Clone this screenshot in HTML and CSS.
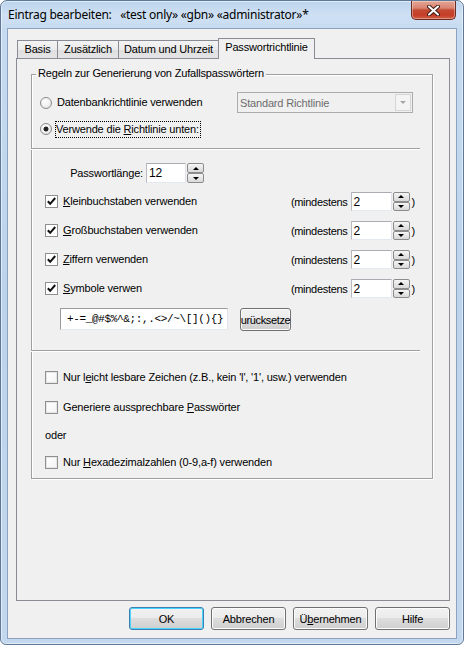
FILE: index.html
```html
<!DOCTYPE html>
<html lang="de">
<head>
<meta charset="utf-8">
<title>Eintrag bearbeiten</title>
<link rel="stylesheet" href="styles.css">
</head>
<body>
<div class="window">
  <div class="titlebar">
    <span class="title">Eintrag bearbeiten:&nbsp;&nbsp; «test only» «gbn» «administrator»*</span>
    <div class="close">
      <svg width="13" height="11" viewBox="0 0 13 11">
        <path d="M2 1.5 L11 9.5 M11 1.5 L2 9.5" stroke="#3d1c16" stroke-width="4" stroke-linecap="round" fill="none"/>
        <path d="M2 1.5 L11 9.5 M11 1.5 L2 9.5" stroke="#ffffff" stroke-width="2" stroke-linecap="round" fill="none"/>
      </svg>
    </div>
  </div>
  <div class="client">
    <div class="tabs">
      <div class="tab w-basis">Basis</div>
      <div class="tab w-zus">Zusätzlich</div>
      <div class="tab w-datum">Datum und Uhrzeit</div>
      <div class="tab w-pass active">Passwortrichtlinie</div>
    </div>
    <div class="panel">
      <div class="group">
        <span class="legend">Regeln zur Generierung von Zufallspasswörtern</span>

        <div class="row row-combo">
          <span class="radio"></span>
          <span class="lbl">Datenbankrichtlinie verwenden</span>
          <div class="combo">
            <span class="combo-text">Standard Richtlinie</span>
            <span class="combo-btn"><span class="arrow-down gray"></span></span>
          </div>
        </div>

        <div class="row row-radio2">
          <span class="radio checked"></span>
          <span class="lbl focus">Verwende die <u>R</u>ichtlinie unten:</span>
        </div>

        <div class="sep sep1"></div>

        <div class="row row-len">
          <span class="len-label">Passwortlänge:</span>
          <div class="edit len-edit">12</div>
          <div class="spin"><span class="sbtn"><span class="arrow-up"></span></span><span class="sbtn"><span class="arrow-down"></span></span></div>
        </div>

        <div class="row row-chk first">
          <div class="chk-left"><span class="check on"><svg width="11" height="11" viewBox="0 0 11 11"><path d="M1.8 5.2 L4.2 7.8 L9.2 2" stroke="#111" stroke-width="2" fill="none"/></svg></span><span class="lbl"><u>K</u>leinbuchstaben verwenden</span></div>
          <span class="min">(mindestens</span>
          <div class="edit min-edit">2</div>
          <div class="spin"><span class="sbtn"><span class="arrow-up"></span></span><span class="sbtn"><span class="arrow-down"></span></span></div>
          <span class="paren">)</span>
        </div>

        <div class="row row-chk">
          <div class="chk-left"><span class="check on"><svg width="11" height="11" viewBox="0 0 11 11"><path d="M1.8 5.2 L4.2 7.8 L9.2 2" stroke="#111" stroke-width="2" fill="none"/></svg></span><span class="lbl"><u>G</u>roßbuchstaben verwenden</span></div>
          <span class="min">(mindestens</span>
          <div class="edit min-edit">2</div>
          <div class="spin"><span class="sbtn"><span class="arrow-up"></span></span><span class="sbtn"><span class="arrow-down"></span></span></div>
          <span class="paren">)</span>
        </div>

        <div class="row row-chk">
          <div class="chk-left"><span class="check on"><svg width="11" height="11" viewBox="0 0 11 11"><path d="M1.8 5.2 L4.2 7.8 L9.2 2" stroke="#111" stroke-width="2" fill="none"/></svg></span><span class="lbl"><u>Z</u>iffern verwenden</span></div>
          <span class="min">(mindestens</span>
          <div class="edit min-edit">2</div>
          <div class="spin"><span class="sbtn"><span class="arrow-up"></span></span><span class="sbtn"><span class="arrow-down"></span></span></div>
          <span class="paren">)</span>
        </div>

        <div class="row row-chk">
          <div class="chk-left"><span class="check on"><svg width="11" height="11" viewBox="0 0 11 11"><path d="M1.8 5.2 L4.2 7.8 L9.2 2" stroke="#111" stroke-width="2" fill="none"/></svg></span><span class="lbl"><u>S</u>ymbole verwen</span></div>
          <span class="min">(mindestens</span>
          <div class="edit min-edit">2</div>
          <div class="spin"><span class="sbtn"><span class="arrow-up"></span></span><span class="sbtn"><span class="arrow-down"></span></span></div>
          <span class="paren">)</span>
        </div>

        <div class="row row-sym">
          <div class="edit sym-edit">+-=_@#$%^&amp;;:,.&lt;&gt;/~\[](){}</div>
          <div class="btn reset"><span>urücksetze</span></div>
        </div>

        <div class="sep sep2"></div>

        <div class="row row-opt o1">
          <span class="check"></span><span class="lbl">Nur l<u>e</u>icht lesbare Zeichen (z.B., kein  'l', '1', usw.) verwenden</span>
        </div>
        <div class="row row-opt o2">
          <span class="check"></span><span class="lbl">Generiere aussprechbare <u>P</u>asswörter</span>
        </div>
        <div class="row row-opt o3">
          <span class="lbl oder">oder</span>
        </div>
        <div class="row row-opt o4">
          <span class="check"></span><span class="lbl">Nur <u>H</u>exadezimalzahlen (0-9,a-f) verwenden</span>
        </div>
      </div>
    </div>
    <div class="buttons">
      <div class="btn dlg default">OK</div>
      <div class="btn dlg">Abbrechen</div>
      <div class="btn dlg">Ü<u>b</u>ernehmen</div>
      <div class="btn dlg">Hilfe</div>
    </div>
  </div>
</div>
</body>
</html>
```

FILE: styles.css
```css
* { box-sizing: border-box; }
html, body { margin: 0; padding: 0; }
body {
  width: 464px;
  height: 645px;
  background: #ffffff;
  font-family: "Liberation Sans", Arial, sans-serif;
  font-size: 11px;
  letter-spacing: -0.17px;
  color: #000;
  overflow: hidden;
}
u { text-decoration: underline; text-underline-offset: 1px; }

.window {
  width: 464px;
  height: 645px;
  border: 1px solid #5d7997;
  border-radius: 7px 7px 6px 6px;
  background: linear-gradient(180deg, #bcd4ee 0px, #cfe0f3 14px, #c6dbf1 28px, #bcd3ec 300px, #c3d8ee 645px);
  box-shadow: inset 0 0 0 1px rgba(255,255,255,0.55);
  display: flex;
  flex-direction: column;
}

.titlebar {
  height: 27px;
  display: flex;
  align-items: flex-start;
  padding-left: 7px;
}
.title {
  font-family: "Noto Sans", "Open Sans", sans-serif;
  font-size: 12px;
  letter-spacing: -0.25px;
  line-height: 16px;
  margin-top: 6px;
  color: #000;
  white-space: pre;
}
.close {
  margin-left: auto;
  margin-right: 7px;
  width: 45px;
  height: 19px;
  border: 1px solid #6b2a20;
  border-top: none;
  border-radius: 0 0 5px 5px;
  background: linear-gradient(180deg, #e4a594 0px, #d98572 7px, #c44a33 9px, #c53d26 14px, #d7664c 19px);
  box-shadow: inset 0 0 0 1px rgba(255,255,255,0.35);
  display: flex;
  align-items: center;
  justify-content: center;
}

.client {
  margin-left: 6px;
  width: 450px;
  height: 611px;
  background: #f0f0f0;
  border: 1px solid #8ba3be;
  display: flex;
  flex-direction: column;
}

/* tabs */
.tabs {
  display: flex;
  align-items: flex-end;
  height: 20px;
  margin: 9px 0 0 9px;
}
.tab {
  height: 18px;
  border: 1px solid #898c95;
  border-bottom: none;
  background: linear-gradient(180deg, #f3f3f3, #ebebeb 50%, #dedede 51%, #e5e5e5);
  text-align: center;
  line-height: 16px;
  white-space: nowrap;
}
.tab + .tab { margin-left: -1px; }
.w-basis { width: 41px; }
.w-zus { width: 62px; }
.w-datum { width: 101px; }
.w-pass { width: 97px; }
.tab.active {
  height: 21px;
  margin-bottom: -1px;
  background: #f0f0f0;
  position: relative;
  z-index: 1;
  line-height: 17px;
}

.panel {
  margin-left: 8px;
  width: 434px;
  height: 543px;
  border: 1px solid #898c95;
  background: #f0f0f0;
}

/* group box */
.group {
  position: relative;
  margin: 15px 0 0 14px;
  width: 402px;
  border: 1px solid #a0a0a0;
  box-shadow: 1px 1px 0 #ffffff, inset 1px 1px 0 #ffffff;
  padding-top: 17px;
  padding-bottom: 8px;
}
.legend {
  position: absolute;
  left: 4px;
  top: -8px;
  padding: 0 2px;
  background: #f0f0f0;
  line-height: 13px;
  white-space: nowrap;
}

.row {
  display: flex;
  align-items: center;
  white-space: nowrap;
}
.lbl { line-height: 13px; }

.radio {
  width: 12px;
  height: 12px;
  border-radius: 50%;
  border: 1px solid #8a8a8a;
  background: radial-gradient(circle at 40% 35%, #ffffff 0, #f4f4f4 40%, #dcdcdc 100%);
  margin-left: 8px;
  margin-right: 5px;
  position: relative;
  flex: none;
}
.radio.checked {
  background:
    radial-gradient(circle at 50% 50%, #1a1a1a 0, #2a2a2a 2.2px, transparent 2.8px),
    radial-gradient(circle at 40% 35%, #ffffff 0, #f4f4f4 40%, #dcdcdc 100%);
}

.row-combo { height: 21px; }
.combo {
  margin-left: auto;
  margin-right: 19px;
  width: 176px;
  height: 21px;
  border: 1px solid #acacac;
  background: #f0f0f0;
  display: flex;
  align-items: center;
  padding-left: 2px;
}
.combo-text { color: #6d6d6d; flex: 1; }
.combo-btn {
  width: 16px;
  height: 17px;
  margin-right: 1px;
  border: 1px solid #d5d5d5;
  background: #f4f4f4;
  display: flex;
  align-items: center;
  justify-content: center;
}

.row-radio2 { height: 16px; margin-top: 8px; }
.focus {
  outline: 1px dotted #000;
  outline-offset: 0;
  padding: 1px 1px 2px 0;
  margin-left: -1px;
  line-height: 12px;
}

.sep {
  height: 2px;
  border-top: 1px solid #a0a0a0;
  border-bottom: 1px solid #ffffff;
  margin-left: -1px;
  width: 389px;
}
.sep1 { margin-top: 11px; }
.sep2 { margin-top: 19px; }

.row-len { height: 20px; margin-top: 13px; }
.len-label {
  width: 114px;
  text-align: right;
  padding-right: 3px;
}
.edit {
  background: #ffffff;
  border: 1px solid;
  border-color: #abadb3 #e2e3ea #e3e9ef #b8bac0;
  padding-left: 2px;
  display: flex;
  align-items: center;
  overflow: hidden;
}
.len-edit { width: 40px; height: 20px; font-size: 12px; }
.min-edit { width: 41px; height: 19px; font-size: 12px; }

.spin {
  display: flex;
  flex-direction: column;
  width: 17px;
  margin-left: 1px;
  align-self: stretch;
}
.sbtn {
  flex: 1;
  border: 1px solid #8c8c8c;
  border-radius: 2px;
  background: linear-gradient(180deg, #f6f6f6, #e6e6e6 50%, #d9d9d9);
  display: flex;
  align-items: center;
  justify-content: center;
}
.arrow-up {
  width: 0; height: 0;
  border-left: 3px solid transparent;
  border-right: 3px solid transparent;
  border-bottom: 3px solid #000;
}
.arrow-down {
  width: 0; height: 0;
  border-left: 3px solid transparent;
  border-right: 3px solid transparent;
  border-top: 3px solid #000;
}
.arrow-down.gray { border-top-color: #a6a6a6; }

.row-chk { height: 19px; margin-top: 10px; }
.row-chk.first { margin-top: 9px; }
.chk-left {
  flex: 1;
  display: flex;
  align-items: center;
}
.check {
  width: 13px;
  height: 13px;
  border: 1px solid #8e8f8f;
  background: linear-gradient(135deg, #ffffff, #f3f3f3);
  box-shadow: inset 0 0 0 1px #e6e6e6;
  margin-left: 13px;
  margin-right: 5px;
  flex: none;
  display: flex;
  align-items: center;
  justify-content: center;
}
.check.on { background: #ffffff; box-shadow: none; }
.min { margin-right: 3px; letter-spacing: -0.3px; }
.paren { margin-left: 2px; margin-right: 17px; }

.row-sym { height: 23px; margin-top: 10px; }
.sym-edit {
  margin-left: 28px;
  width: 168px;
  height: 22px;
  align-self: flex-start;
  border-color: #9a9a9a #e2e3ea #e3e9ef #9a9a9a;
  padding-left: 6px;
  font-family: "Liberation Mono", "DejaVu Sans Mono", monospace;
  font-size: 11px;
  letter-spacing: -0.35px;
}

.btn {
  border: 1px solid #707070;
  border-radius: 3px;
  background: linear-gradient(180deg, #f2f2f2 0%, #ebebeb 48%, #dddddd 50%, #cfcfcf 100%);
  box-shadow: inset 0 0 0 1px #fcfcfc;
  display: flex;
  align-items: center;
  justify-content: center;
  white-space: nowrap;
}
.reset {
  margin-left: 12px;
  width: 51px;
  height: 23px;
  letter-spacing: -0.35px;
}

.row-opt { height: 16px; }
.o1 { margin-top: 17px; }
.o2 { margin-top: 14px; }
.o3 { margin-top: 12px; }
.o4 { margin-top: 11px; }
.oder { margin-left: 13px; }

.buttons {
  display: flex;
  justify-content: flex-end;
  gap: 7px;
  margin-top: 6px;
  padding-right: 6px;
}
.dlg {
  width: 75px;
  height: 23px;
}
.dlg.default {
  border-color: #3c7fb1;
  box-shadow: inset 0 0 0 1px #48d4ff;
}
```
